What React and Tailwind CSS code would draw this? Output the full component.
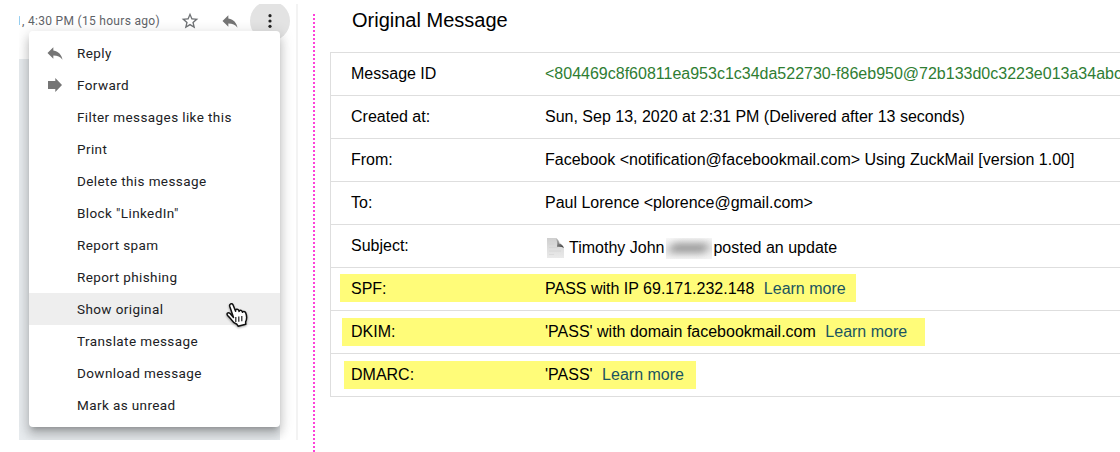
import React from 'react';

const REPLY = 'M10 9V5l-7 7 7 7v-4.1c5 0 8.500 1.600 11 5.100-1-5-4-10-11-11z';

function ReplyIcon() {
  return (
    <svg className="h-5 w-5 shrink-0" viewBox="0 0 24 24" fill="#757575">
      <path d={REPLY} />
    </svg>
  );
}

function ForwardIcon() {
  return (
    <svg className="h-5 w-5 shrink-0" viewBox="0 0 20 20" fill="#757575">
      <path d="M3 6h7.300V3L17 10l-6.700 7V14H3z" />
    </svg>
  );
}

function StarIcon() {
  return (
    <svg className="h-5 w-5 shrink-0" viewBox="0 0 24 24" fill="#6f7275">
      <path d="M22 9.240l-7.190-.62L12 2 9.190 8.630 2 9.240l5.460 4.730L5.820 21 12 17.270 18.180 21l-1.630-7.030L22 9.240zM12 15.400l-3.760 2.270 1-4.280-3.320-2.880 4.380-.38L12 6.100l1.710 4.040 4.380.38-3.320 2.880 1 4.280L12 15.400z" />
    </svg>
  );
}

function HandCursor() {
  return (
    <svg className="absolute left-[195px] top-[269px] h-[28px] w-[26px] drop-shadow-[0_1px_1px_rgba(0,0,0,0.35)]" viewBox="0 0 26 28">
      <path
        d="M9.500 17.500L5.700 6.200C5.100 4.100 7.900 2.700 9 4.800l2.600 6.400c-.5-2.200 2.400-2.700 3.200-.7l.3.900c.2-1.700 2.500-1.600 3.100 0l.3.900c.5-1.300 2.500-1 3.200.6 1.300 3.100 1.600 5.500-.1 8.900l.2 2.500-7.700 1.900-1.200-1.900c-2.500-1.200-4.500-2.700-6-5.200l-3.300-3.700c-1.600-1.900.5-3.300 2.300-2.100z"
        fill="#fff"
        stroke="#111"
        strokeWidth="1.500"
        strokeLinejoin="round"
      />
      <path d="M11.800 17v5M14.800 16.500v5.300M17.800 16v5.300" stroke="#222" strokeWidth="1.200" />
    </svg>
  );
}

function PageIcon() {
  return (
    <svg className="h-5 w-[17px] shrink-0" viewBox="0 0 17 20">
      <defs>
        <linearGradient id="paper" x1="0" y1="0" x2="0" y2="1">
          <stop offset="0" stopColor="#cfcfcf" />
          <stop offset="0.5" stopColor="#dedede" />
          <stop offset="1" stopColor="#eaeaea" />
        </linearGradient>
        <linearGradient id="fold" x1="0" y1="0" x2="0.6" y2="1">
          <stop offset="0" stopColor="#c8c8c8" />
          <stop offset="1" stopColor="#4c4c4c" />
        </linearGradient>
      </defs>
      <path d="M0 0h9.500L17 10v10H0z" fill="url(#paper)" />
      <path d="M8.500 0.300Q11.800 1.300 12 5.500Q15.500 6 17 10Q14.500 8.300 10 8.800Q11 3.500 8.500 0.300z" fill="url(#fold)" />
      <path d="M2 6h5M2 9.500h9M2 13h12M2 16.500h5" stroke="#d2d2d2" strokeWidth="0.600" />
    </svg>
  );
}

const MENU = [
  { label: 'Reply', icon: <ReplyIcon /> },
  { label: 'Forward', icon: <ForwardIcon /> },
  { label: 'Filter messages like this' },
  { label: 'Print' },
  { label: 'Delete this message' },
  { label: 'Block "LinkedIn"' },
  { label: 'Report spam' },
  { label: 'Report phishing' },
  { label: 'Show original', active: true },
  { label: 'Translate message' },
  { label: 'Download message' },
  { label: 'Mark as unread' },
];

function MailPane() {
  return (
    <section className="relative mt-1 ml-[19px] flex h-[436px] w-[279px] shrink-0 flex-col overflow-hidden border-r-2 border-[#f3f3f3] font-['Roboto',sans-serif]">
      <header className="flex h-[55px] shrink-0 items-start">
        <span className="mt-[9px] w-[141px] overflow-hidden whitespace-nowrap text-[12px] leading-4 tracking-[0.3px] text-[#5f6368]">
          <span className="-ml-[4px]">1, 4:30 PM (15 hours ago)</span>
        </span>
        <div className="mt-[7px] ml-5 flex gap-5">
          <StarIcon />
          <ReplyIcon />
        </div>
        <div className="-mt-[3px] ml-[10px] flex h-10 w-10 shrink-0 items-center justify-center rounded-full bg-[#e3e3e3]">
          <svg className="h-5 w-5" viewBox="0 0 20 20" fill="#222">
            <circle cx="10" cy="4.700" r="1.600" />
            <circle cx="10" cy="10" r="1.600" />
            <circle cx="10" cy="15.300" r="1.600" />
          </svg>
        </div>
      </header>
      <div className="w-[261px] grow bg-[#e7ebee]" />
      <div className="absolute top-[27px] left-[10px] w-[251px] rounded-[4px] bg-white py-[6px] shadow-[0_8px_10px_1px_rgba(0,0,0,0.14),0_3px_14px_2px_rgba(0,0,0,0.12),0_5px_5px_-3px_rgba(0,0,0,0.2)]">
        <ul>
          {MENU.map((m) => (
            <li
              key={m.label}
              className={
                m.active
                  ? 'flex h-8 items-center bg-[#eeeeee] pl-4 text-[13.5px] tracking-[0.4px] text-[#202124]'
                  : 'flex h-8 items-center pl-4 text-[13.5px] tracking-[0.4px] text-[#202124]'
              }
            >
              <span className="mr-3 flex w-5">{m.icon}</span>
              {m.label}
            </li>
          ))}
        </ul>
        <HandCursor />
      </div>
    </section>
  );
}

function Row({ label, children }) {
  return (
    <div className="flex h-[43px] items-start border-t border-[#dedede] pt-[10px] pl-5 leading-[22px]">
      <span className="w-[194px] shrink-0">{label}</span>
      <span className="whitespace-nowrap">{children}</span>
    </div>
  );
}

function Learn() {
  return <span className="ml-[9.5px] text-[#1b5560]">Learn more</span>;
}

function OriginalMessage() {
  return (
    <main className="w-[790px] shrink-0 overflow-hidden text-[16px] text-black">
      <h1 className="mt-2 ml-[22px] h-11 text-[20px] leading-6">Original Message</h1>
      <div className="w-[800px] border-b border-l border-[#dedede]">
        <Row label="Message ID">
          <span className="text-[#2e7d32]">&lt;804469c8f60811ea953c1c34da522730-f86eb950@72b133d0c3223e013a34abc</span>
        </Row>
        <Row label="Created at:">Sun, Sep 13, 2020 at 2:31 PM (Delivered after 13 seconds)</Row>
        <Row label="From:">Facebook &lt;notification@facebookmail.com&gt; Using ZuckMail [version 1.00]</Row>
        <Row label="To:">Paul Lorence &lt;plorence@gmail.com&gt;</Row>
        <Row label="Subject:">
          <span className="mt-[2px] ml-[2px] flex items-center">
            <PageIcon />
            <span className="ml-[5px]">Timothy John</span>
            <span className="ml-[2px] flex h-[21px] w-[46px] items-center justify-center overflow-hidden bg-[linear-gradient(to_bottom,#f8f8f8,#e6e6e6_50%,#f5f5f5)]">
              <span className="h-[8px] w-[36px] -skew-x-12 bg-[#8a8a8a] blur-[4px]" />
            </span>
            <span className="ml-[1px]">posted an update</span>
          </span>
        </Row>
        <div className="h-[43px] border-t border-[#dedede] pt-[6px] pl-[9px]">
          <div className="flex h-[28px] w-[516px] bg-[#fffc79] pt-[4px] pl-[11px] leading-[22px]">
            <span className="w-[194px]">SPF:</span>
            <span>PASS with IP 69.171.232.148<Learn /></span>
          </div>
        </div>
        <div className="h-[43px] border-t border-[#dedede] pt-[7px] pl-[11px]">
          <div className="flex h-[28px] w-[583px] bg-[#fffc79] pt-[3px] pl-[9px] leading-[22px]">
            <span className="w-[194px]">DKIM:</span>
            <span>'PASS' with domain facebookmail.com<Learn /></span>
          </div>
        </div>
        <div className="h-[43px] border-t border-[#dedede] pt-[7px] pl-[13px]">
          <div className="flex h-[28px] w-[352px] bg-[#fffc79] pt-[3px] pl-[7px] leading-[22px]">
            <span className="w-[194px]">DMARC:</span>
            <span>'PASS'<Learn /></span>
          </div>
        </div>
      </div>
    </main>
  );
}

export default function App() {
  return (
    <div className="flex h-[452px] w-[1120px] overflow-hidden bg-white font-['Liberation_Sans',Arial,sans-serif]">
      <MailPane />
      <div className="mt-[14px] mr-[15px] ml-[15px] w-[2px] shrink-0 bg-[repeating-linear-gradient(to_bottom,#ff40d9_0_2px,transparent_2px_4px)]" />
      <OriginalMessage />
    </div>
  );
}
